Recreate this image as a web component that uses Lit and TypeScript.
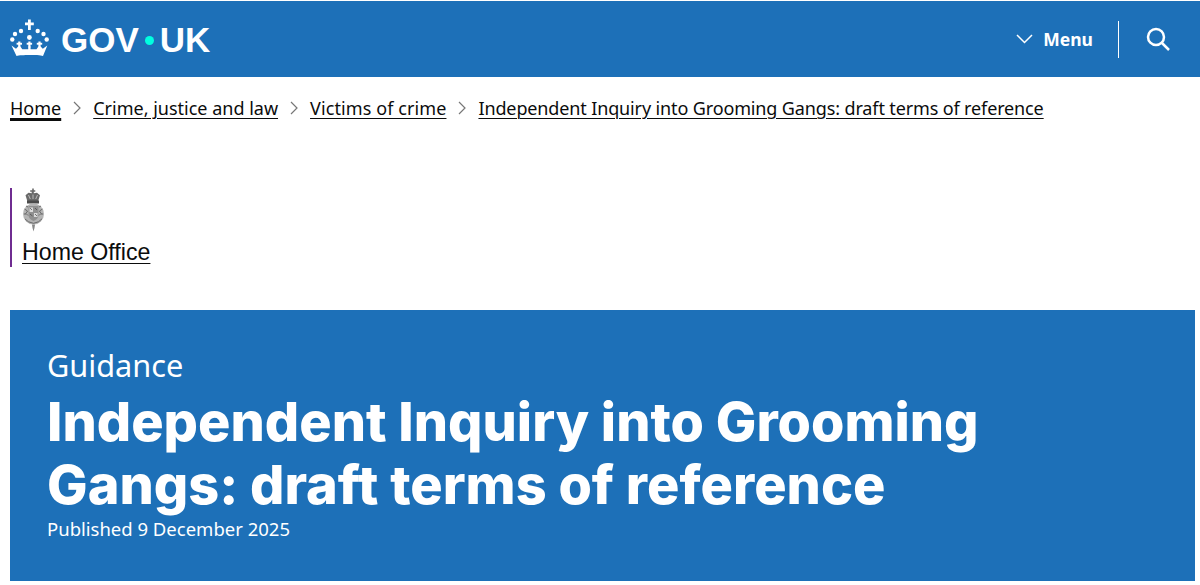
import {LitElement, html, css, svg} from 'lit';
import {customElement} from 'lit/decorators.js';

const crownCross = (x: number) => svg`
  <rect x=${x - 1.1} y="22.500" width="2.200" height="6" />
  <rect x=${x - 2.7} y="23.800" width="5.400" height="1.900" />
`;

const crown = html`
  <svg class="crown" viewBox="0 0 40 37" width="40" height="37" aria-hidden="true">
    <g fill="#fff">
      <path d="M18 .5h2.800v3h3v2.800h-3V11H18V6.300h-3V3.500h3z" />
      <circle cx="11" cy="12" r="2.200" />
      <circle cx="27.700" cy="12" r="2.200" />
      <circle cx="5" cy="15" r="2.200" />
      <circle cx="33.500" cy="15" r="2.200" />
      <circle cx="2.300" cy="20.500" r="2.200" />
      <circle cx="36.700" cy="20.500" r="2.200" />
      <circle cx="19.400" cy="18.500" r="2.400" />
      ${crownCross(9.3)}
      ${crownCross(19.4)}
      ${crownCross(29.5)}
      <path d="M1.500 26.500L6 29.800l2.200-2.300h2.200l1.900 2.800h5.900l.1-2.800h2.200l.1 2.800h5.900l1.900-2.800h2.200l2.200 2.300 4.500-3.300L33 37c-5-1.200-22-1.200-26.500 0z" />
    </g>
  </svg>
`;

const crest = html`
  <svg class="crest" viewBox="0 0 24 44" width="24" height="44" aria-hidden="true">
    <path d="M11.200 .5h1.600v1.800h1.500v1.400h-1.500v1.500l3.200-.5 3 2.600-1.800 5.700H6.300L4.500 7.300l3-2.600 3.200.5V3.700H9.200V2.300h2z" fill="#6a6a6a" />
    <path d="M7.500 7l1.800 4M16.500 7l-1.800 4M12 6.500V11" stroke="#ddd" stroke-width=".7" fill="none" />
    <rect x="6" y="12.500" width="12" height="3" fill="#4a4a4a" />
    <circle cx="12.500" cy="26" r="10.500" fill="#b4b4b4" />
    <path d="M7.500 18h10v9c0 3-2.200 5-5 6-2.800-1-5-3-5-6z" fill="#909090" />
    <path d="M8.500 19.500h3.500v4.500H8.500zM13 25h3.500v4H13z" fill="#dadada" />
    <path d="M3.500 21l3 2-1.500 2.500 2 2M21.500 21l-3 2 1.500 2.500-2 2M4 31l3.500 2.800 5 1.500 5-1.500 3.500-3M5 18l2 1M20 18l-2 1" fill="none" stroke="#555" stroke-width=".8" />
    <path d="M9 20l2 2M14 20l2 2M9 26l2.500 2M14 26l2 2M3 26h2M20 26h2" stroke="#444" stroke-width=".7" fill="none" />
    <path d="M11 36.500h3l-.5 3.500-1 3.500-1-3.500z" fill="#888" />
  </svg>
`;

@customElement('app-root')
export class AppRoot extends LitElement {
  static override styles = css`
    :host {
      display: block;
      height: 585px;
      overflow: hidden;
      background: #fff;
      color: #0b0c0c;
      font-family: 'Noto Sans', sans-serif;
    }

    .top {
      margin-top: 1px;
      height: 76px;
      background: #1d70b8;
      color: #fff;
      display: flex;
      align-items: center;
      justify-content: space-between;
      padding: 0 29px 0 10px;
    }

    .logo {
      display: flex;
      align-items: center;
      gap: 11px;
    }

    .crown {
      margin-top: -4px;
    }

    .wordmark {
      display: flex;
      align-items: center;
      font-family: 'Liberation Sans', sans-serif;
      font-weight: 700;
      font-size: 35px;
      line-height: 1;
    }

    .dot {
      width: 9px;
      height: 9px;
      margin: 2px 6px 0 6px;
      border-radius: 50%;
      background: #00ffe0;
    }

    .actions {
      display: flex;
      align-items: center;
    }

    .menu {
      display: flex;
      align-items: center;
      gap: 10px;
      padding-right: 25px;
      font-size: 17.500px;
      font-weight: 700;
    }

    .rule {
      width: 1px;
      height: 37px;
      background: #fff;
    }

    .search {
      display: flex;
      margin-left: 26px;
    }

    .crumbs {
      display: flex;
      align-items: center;
      height: 61px;
      padding-left: 10px;
      font-size: 18px;
    }

    .crumbs a {
      color: #0b0c0c;
      text-decoration: underline;
      text-decoration-thickness: 1px;
      text-underline-offset: 3px;
    }

    .crumbs a.home {
      text-decoration-thickness: 3px;
    }

    .crumbs a.victims {
      letter-spacing: 0.1px;
    }

    .crumbs a.long {
      letter-spacing: -0.13px;
    }

    .sep {
      display: flex;
      margin: 0 12px;
    }

    .org {
      margin: 50px 0 0 10px;
      height: 79px;
      box-sizing: border-box;
      padding-left: 9px;
      border-left: 2px solid #6f2c91;
      display: flex;
      flex-direction: column;
      align-items: flex-start;
      justify-content: space-between;
    }

    .crest {
      display: block;
    }

    .org a {
      margin-left: 1px;
      color: #0b0c0c;
      font-family: 'Liberation Sans', sans-serif;
      font-size: 23.200px;
      line-height: 29px;
      text-decoration: underline;
      text-decoration-thickness: 1px;
      text-underline-offset: 3px;
    }

    .banner {
      margin: 43px 5px 0 10px;
      height: 271px;
      box-sizing: border-box;
      padding: 35px 37px 0;
      background: #1d70b8;
      color: #fff;
    }

    .kicker {
      font-size: 30.700px;
      line-height: 40px;
    }

    h1 {
      margin: 0;
      width: 1000px;
      padding-top: 5px;
      font-family: 'Inter', sans-serif;
      font-size: 54px;
      font-weight: 800;
      line-height: 63px;
    }

    .published {
      font-size: 18.500px;
      line-height: 26px;
    }
  `;

  override render() {
    return html`
      <header class="top">
        <div class="logo">
          ${crown}
          <div class="wordmark">GOV<span class="dot"></span>UK</div>
        </div>
        <div class="actions">
          <div class="menu">
            <svg width="17" height="10" viewBox="0 0 17 10" aria-hidden="true">
              <path d="M1 1l7.500 7.500L16 1" fill="none" stroke="#fff" stroke-width="1.500" />
            </svg>
            Menu
          </div>
          <div class="rule"></div>
          <div class="search">
            <svg width="26" height="26" viewBox="0 0 26 26" aria-hidden="true">
              <circle cx="11" cy="11" r="8" fill="none" stroke="#fff" stroke-width="2.500" />
              <path d="M16.500 16.500L24 24" fill="none" stroke="#fff" stroke-width="2.500" />
            </svg>
          </div>
        </div>
      </header>
      <nav class="crumbs">
        <a class="home" href="#">Home</a>
        ${this.sep()}
        <a href="#">Crime, justice and law</a>
        ${this.sep()}
        <a class="victims" href="#">Victims of crime</a>
        ${this.sep()}
        <a class="long" href="#">Independent Inquiry into Grooming Gangs: draft terms of reference</a>
      </nav>
      <div class="org">
        ${crest}
        <a href="#">Home Office</a>
      </div>
      <section class="banner">
        <div class="kicker">Guidance</div>
        <h1>Independent Inquiry into Grooming Gangs: draft terms of reference</h1>
        <div class="published">Published 9 December 2025</div>
      </section>
    `;
  }

  private sep() {
    return html`
      <span class="sep">
        <svg width="8" height="14" viewBox="0 0 8 14" aria-hidden="true">
          <path d="M1 1l6 6-6 6" fill="none" stroke="#777" stroke-width="1.200" />
        </svg>
      </span>
    `;
  }
}

declare global {
  interface HTMLElementTagNameMap {
    'app-root': AppRoot;
  }
}
